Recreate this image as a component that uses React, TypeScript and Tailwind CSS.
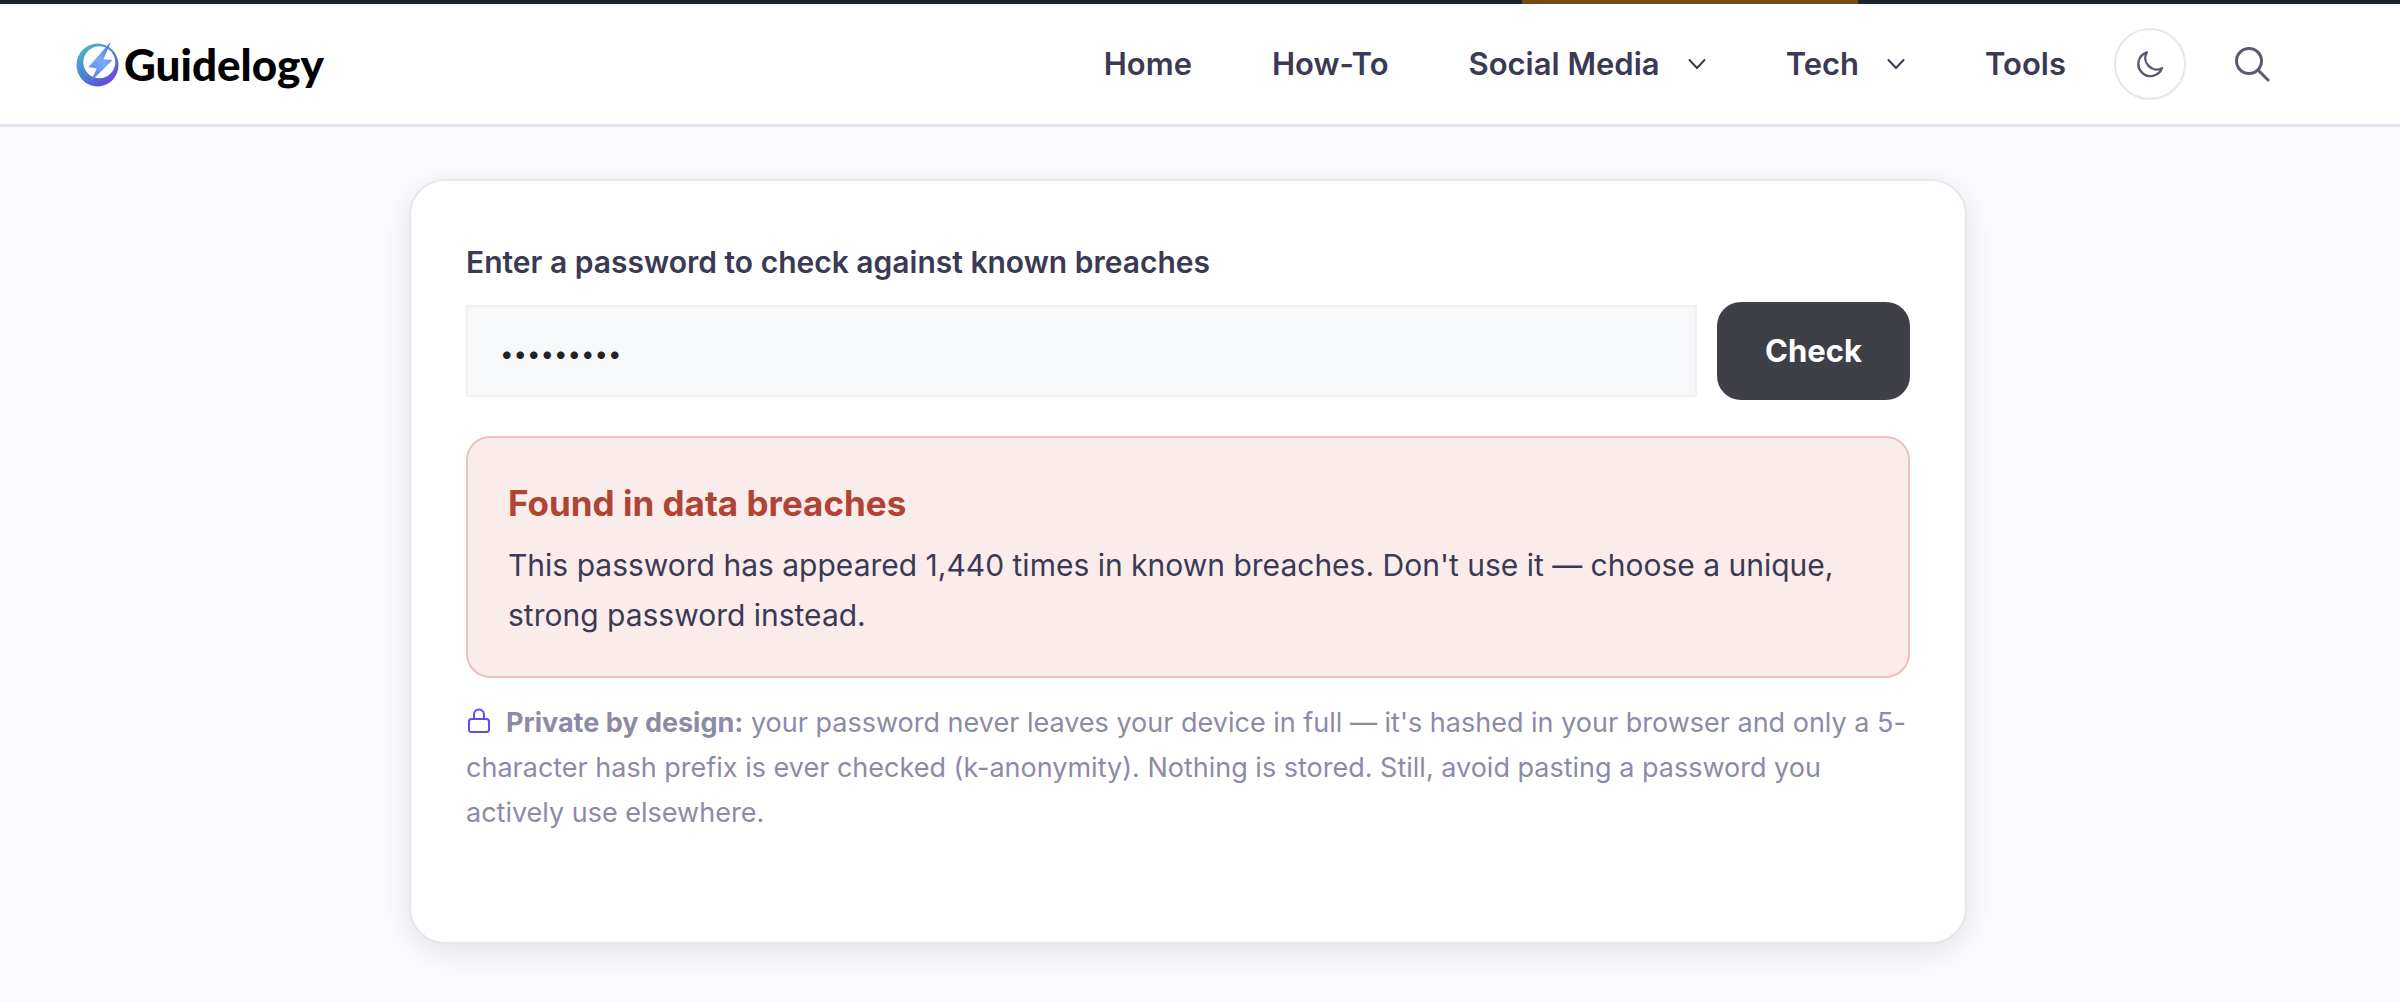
import React from "react";

const links = [
  { label: "Home" },
  { label: "How-To" },
  { label: "Social Media", menu: true },
  { label: "Tech", menu: true },
  { label: "Tools" },
];

function LogoMark() {
  return (
    <svg viewBox="0 0 43 46" className="h-[46px] w-[43px]" aria-hidden="true">
      <defs>
        <linearGradient id="ring" x1="0.1" y1="0.1" x2="0.8" y2="1">
          <stop offset="0" stopColor="#4fb5c9" />
          <stop offset="0.45" stopColor="#4a86d0" />
          <stop offset="1" stopColor="#6a3fe0" />
        </linearGradient>
        <linearGradient id="bolt" x1="0.8" y1="0" x2="0.3" y2="1">
          <stop offset="0" stopColor="#4577d6" />
          <stop offset="0.5" stopColor="#78aaff" />
          <stop offset="1" stopColor="#5b7fe6" />
        </linearGradient>
      </defs>
      <path
        fillRule="evenodd"
        fill="url(#ring)"
        d="M21.5 2.500a21 21.500 0 1 0 0 43a21 21.500 0 1 0 0-43zM23.300 5.200a16 16 0 1 1 0 32a16 16 0 1 1 0-32z"
      />
      <path fill="url(#bolt)" d="M35 0.500L27.500 18.200L36.500 19L14.500 41L20.800 27.500L12.500 26z" />
    </svg>
  );
}

function Chevron() {
  return (
    <svg
      viewBox="0 0 18 12"
      className="h-3 w-[18px]"
      fill="none"
      stroke="currentColor"
      strokeWidth="2"
      strokeLinecap="round"
      strokeLinejoin="round"
      aria-hidden="true"
    >
      <path d="M1.500 2L9 10L16.500 2" />
    </svg>
  );
}

export default function App() {
  return (
    <div className="min-h-screen bg-[#fbfbfd] font-['Inter',sans-serif] text-[#3b3a54]">
      <div className="flex h-1 bg-[#1d232a]">
        <div className="ml-[63.400%] w-[14%] bg-[#734917]" />
      </div>
      <header className="flex h-[123px] items-center border-b-3 border-[#e4e4ed] bg-white pr-[130px] pl-[76px]">
        <a
          href="#"
          className="flex items-center gap-[5px] font-['Lato',sans-serif] text-[44px] leading-none font-black text-black"
        >
          <LogoMark />
          <span>Guidelogy</span>
        </a>
        <nav className="ml-auto flex items-center gap-20 text-[31px] font-semibold">
          {links.map((l) => (
            <a key={l.label} href="#" className="flex items-center gap-7 whitespace-nowrap">
              {l.label}
              {l.menu && <Chevron />}
            </a>
          ))}
        </nav>
        <button
          type="button"
          aria-label="Dark mode"
          className="ml-12 flex size-18 items-center justify-center rounded-full border-2 border-[#e6e5f0] text-[#5a5a72]"
        >
          <svg
            viewBox="0 0 28 28"
            className="size-7"
            fill="none"
            stroke="currentColor"
            strokeWidth="2.400"
            strokeLinejoin="round"
            aria-hidden="true"
          >
            <path d="M10.800 2.300A12.200 12.200 0 1 0 26 18.200A11.500 11.500 0 0 1 10.800 2.300z" />
          </svg>
        </button>
        <button type="button" aria-label="Search" className="ml-12 text-[#5a5a72]">
          <svg
            viewBox="0 0 36 36"
            className="size-9"
            fill="none"
            stroke="currentColor"
            strokeWidth="3"
            strokeLinecap="round"
            aria-hidden="true"
          >
            <circle cx="15" cy="15" r="12.500" />
            <path d="M24 24L34 34" />
          </svg>
        </button>
      </header>
      <main className="pt-[52px] pr-6">
        <section className="mx-auto max-w-[1558px] rounded-[36px] border-2 border-[#e6e5f0] bg-white px-[55px] pt-[60px] pb-[107px] shadow-[0_8px_32px_rgba(20,20,40,0.1)]">
          <label htmlFor="password" className="block text-[30px] leading-[42px] font-semibold">
            Enter a password to check against known breaches
          </label>
          <form className="mt-[19px] flex items-center gap-5" onSubmit={(e) => e.preventDefault()}>
            <input
              id="password"
              type="password"
              defaultValue="sunshine1"
              className="h-[92px] min-w-0 flex-1 border-2 border-[#f0f0f0] bg-[#f7f8fa] px-8 pt-1 text-[24px] text-[#222] outline-none"
            />
            <button
              type="submit"
              className="h-[98px] rounded-3xl bg-[#3f3f48] px-12 text-[31px] font-bold text-white"
            >
              Check
            </button>
          </form>
          <div role="alert" className="mt-9 rounded-3xl border-2 border-[#ecbfc1] bg-[#faeceb] px-10 pt-10 pb-9">
            <h2 className="text-[35px] leading-[50px] font-bold text-[#b04434]">Found in data breaches</h2>
            <p className="mt-3 text-[30px] leading-[50px]">
              This password has appeared 1,440 times in known breaches. Don't use it — choose a unique, strong
              password instead.
            </p>
          </div>
          <p className="mt-[22px] text-[27px] leading-[45px] text-[#8c8ba6]">
            <svg
              viewBox="0 0 24 28"
              className="mr-4 inline-block h-7 w-6 align-[-3px] text-[#5b4df5]"
              fill="none"
              stroke="currentColor"
              strokeWidth="2"
              aria-hidden="true"
            >
              <rect x="3" y="12" width="20" height="13" rx="2.500" />
              <path d="M8 12V7.500a5 5 0 0 1 10 0V12" />
            </svg>
            <strong className="font-bold">Private by design:</strong> your password never leaves your device in
            full — it's hashed in your browser and only a 5-character hash prefix is ever checked (k-anonymity).
            Nothing is stored. Still, avoid pasting a password you actively use elsewhere.
          </p>
        </section>
      </main>
    </div>
  );
}
